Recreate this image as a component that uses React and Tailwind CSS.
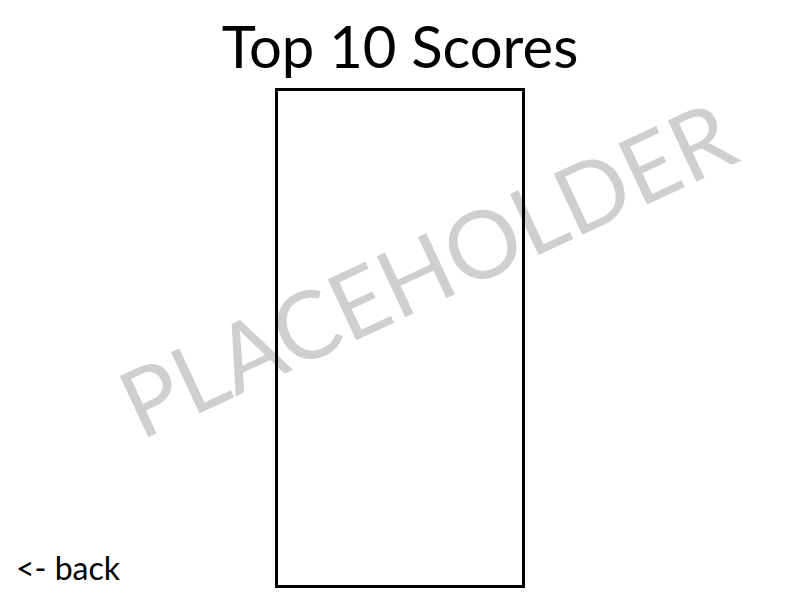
const App = () => {
  return (
    <div className="relative w-[800px] h-[600px] bg-white overflow-hidden font-['Lato',sans-serif] text-black">
      <div
        className="absolute left-[426px] top-[268px] -translate-x-1/2 -translate-y-1/2 -rotate-[25deg] whitespace-nowrap text-[94px] leading-none text-[#cfcfcf] pointer-events-none select-none"
      >
        PLACEHOLDER
      </div>

      <div className="relative z-10 flex flex-col items-center">
        <h1 className="h-[88px] pt-[17px] text-[58px] leading-none font-normal">Top 10 Scores</h1>
        <div className="grid w-full grid-cols-[275px_250px_275px]">
          <div className="flex items-end pb-[4px] pl-[16px]">
            <span className="text-[32px] leading-none">&lt;- back</span>
          </div>
          <div className="h-[500px] border-[3px] border-black"></div>
          <div></div>
        </div>
      </div>
    </div>
  );
};

export default App;
